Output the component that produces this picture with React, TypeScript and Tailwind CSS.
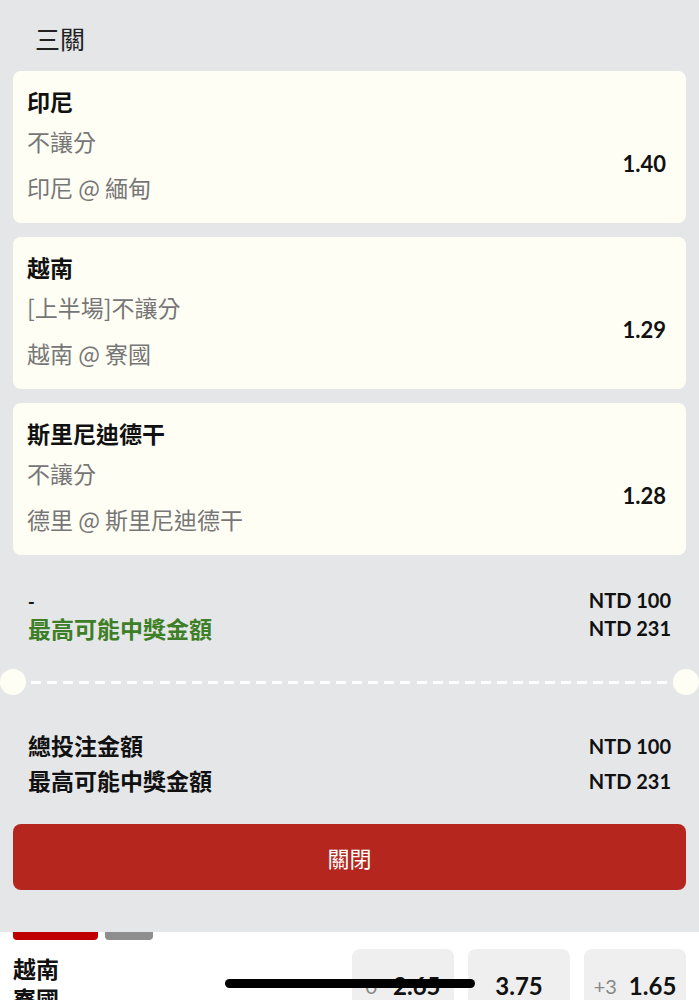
import React from 'react'

const CJK = "font-['Noto_Sans_CJK_TC','Noto_Sans',sans-serif]"
const NUM = "font-['Lato','Noto_Sans_CJK_TC',sans-serif]"

interface Leg {
    team: string;
    market: string;
    match: string;
    odds: string;
}

const legs: Leg[] = [
    { team: '印尼', market: '不讓分', match: '印尼 @ 緬甸', odds: '1.40' },
    { team: '越南', market: '[上半場]不讓分', match: '越南 @ 寮國', odds: '1.29' },
    { team: '斯里尼迪德干', market: '不讓分', match: '德里 @ 斯里尼迪德干', odds: '1.28' },
]

const dashes = Array.from({ length: 40 }, (_, i) => i)

const LegCard = ({ team, market, match, odds }: Leg) => (
    <div className="flex justify-between rounded-lg bg-[#fffef5] pl-[14px] pr-5 h-[152px]">
        <div className={`flex flex-col pt-[15px] ${CJK}`}>
            <span className="text-[23px] leading-[30px] font-bold text-[#111]">{team}</span>
            <span className="mt-[10px] text-[23px] leading-[30px] text-[#767676]">{market}</span>
            <span className="mt-[16px] text-[23px] leading-[30px] text-[#767676]">{match}</span>
        </div>
        <span className={`${NUM} text-[22px] leading-[30px] font-bold text-[#111] mt-[78px]`}>{odds}</span>
    </div>
)

const AmountRow = ({ label, value, className }: { label: string; value: string; className?: string }) => (
    <div className="flex items-center justify-between h-[35px]">
        <span className={`${CJK} text-[23px] font-bold ${className ?? 'text-[#111]'}`}>{label}</span>
        <span className={`${NUM} text-[20px] font-bold text-[#111]`}>{value}</span>
    </div>
)

export default function App() {
    return (
        <div className="w-[699px] h-[1000px] overflow-hidden bg-white relative">
            {/* --- Bet detail sheet --- */}
            <div className="bg-[#e5e6e8] pb-[42px] relative z-10">
                <div className={`${CJK} px-[35px] pt-[20px] h-[71px] text-[25px] leading-[36px] text-[#222]`}>三關</div>

                <div className="flex flex-col gap-[14px] px-[13px]">
                    {legs.map((leg) => (
                        <LegCard key={leg.odds} {...leg} />
                    ))}
                </div>

                {/* Single summary */}
                <div className="px-7 pt-[31px]">
                    <div className="flex items-center justify-between h-[28px]">
                        <span className={`${CJK} text-[18px] font-bold text-[#111]`}>-</span>
                        <span className={`${NUM} text-[20px] font-bold text-[#111]`}>NTD 100</span>
                    </div>
                    <div className="flex items-center justify-between h-[28px]">
                        <span className={`${CJK} text-[23px] font-bold text-[#3d7f26]`}>最高可能中獎金額</span>
                        <span className={`${NUM} text-[20px] font-bold text-[#111]`}>NTD 231</span>
                    </div>
                </div>

                {/* Ticket tear line */}
                <div className="flex items-center mt-[27px] h-[26px]">
                    <div className="w-[26px] h-[26px] rounded-full bg-[#fffef5] shrink-0" />
                    <div className="flex-1 flex justify-between px-[5px]">
                        {dashes.map((i) => (
                            <span key={i} className="w-[10px] h-[3px] bg-white" />
                        ))}
                    </div>
                    <div className="w-[26px] h-[26px] rounded-full bg-[#fffef5] shrink-0" />
                </div>

                {/* Totals */}
                <div className="px-7 mt-[33px]">
                    <AmountRow label="總投注金額" value="NTD 100" />
                    <AmountRow label="最高可能中獎金額" value="NTD 231" />
                </div>

                <div className="px-[13px] mt-[26px]">
                    <button className={`${CJK} w-full h-[66px] rounded-lg bg-[#b5261e] text-white text-[22px]`}>
                        關閉
                    </button>
                </div>
            </div>

            {/* --- Page behind the sheet --- */}
            <div className="px-[13px]">
                <div className="flex gap-[7px]">
                    <div className="w-[85px] h-[8px] rounded-b bg-[#c00000]" />
                    <div className="w-[48px] h-[8px] rounded-b bg-[#8e8e8e]" />
                </div>
                <div className="flex justify-between mt-[9px]">
                    <div className={`${CJK} flex flex-col text-[23px] font-bold leading-[30px] text-[#111] pt-[4px]`}>
                        <span>越南</span>
                        <span>寮國</span>
                    </div>
                    <div className="flex gap-[14px]">
                        <div className={`${NUM} w-[102px] h-[70px] rounded-lg bg-[#efefef] flex items-center justify-center gap-4 pt-[4px]`}>
                            <span className="text-[20px] text-[#888]">0</span>
                            <span className="text-[24px] font-bold text-[#111]">2.65</span>
                        </div>
                        <div className={`${NUM} w-[102px] h-[70px] rounded-lg bg-[#efefef] flex items-center justify-center pt-[4px]`}>
                            <span className="text-[24px] font-bold text-[#111]">3.75</span>
                        </div>
                        <div className={`${NUM} w-[102px] h-[70px] rounded-lg bg-[#efefef] flex items-center justify-center gap-3 pt-[4px]`}>
                            <span className="text-[20px] text-[#888]">+3</span>
                            <span className="text-[24px] font-bold text-[#111]">1.65</span>
                        </div>
                    </div>
                </div>
            </div>

            {/* Home indicator */}
            <div className="absolute left-[225px] top-[979px] w-[250px] h-[9px] rounded-full bg-black z-20" />
        </div>
    )
}
